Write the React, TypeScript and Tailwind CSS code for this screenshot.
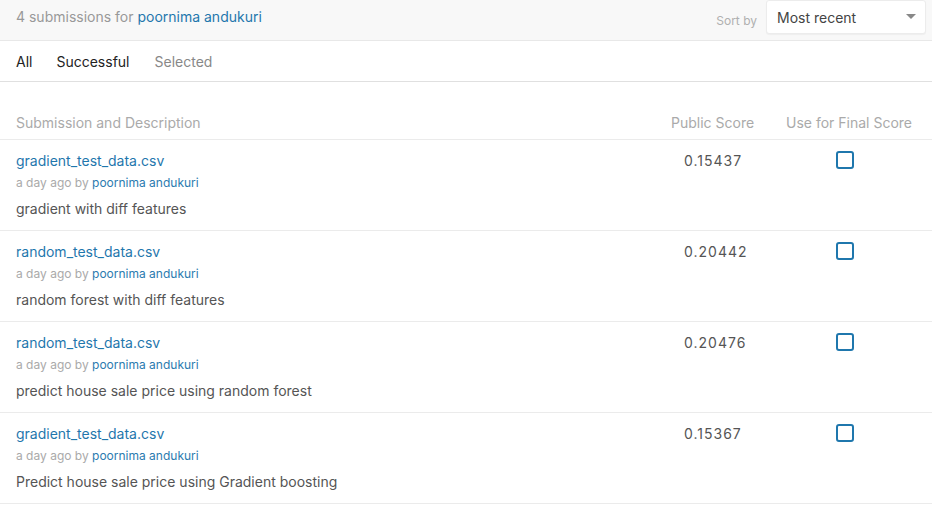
import React from "react"

const rows = [
  { file: "gradient_test_data.csv", desc: "gradient with diff features", score: "0.15437" },
  { file: "random_test_data.csv", desc: "random forest with diff features", score: "0.20442" },
  { file: "random_test_data.csv", desc: "predict house sale price using random forest", score: "0.20476" },
  { file: "gradient_test_data.csv", desc: "Predict house sale price using Gradient boosting", score: "0.15367" },
]

export default function App() {
  return (
    <div className="w-[932px] h-[508px] bg-white overflow-hidden font-['Inter','Liberation_Sans',sans-serif] text-[#333]">
      <div className="h-[41px] bg-[#f8f8f8] border-b border-[#e8e8e8] flex items-start justify-between pl-4 pr-[6px]">
        <div className="text-[14px] text-[#999] leading-none pt-[10px]">
          4 submissions for <span className="text-[#1f77ad]">poornima andukuri</span>
        </div>
        <div className="flex items-start">
          <span className="text-[12px] text-[#b0b0b0] pt-[12px] mr-[9px]">Sort by</span>
          <div className="w-[160px] h-[34px] bg-white rounded-[3px] border border-[#ececec] flex items-center justify-between pl-[10px] pr-[9px] shadow-[0_1px_1px_rgba(0,0,0,0.04)]">
            <span className="text-[14px] text-[#444]">Most recent</span>
            <svg width="10" height="6" viewBox="0 0 10 6">
              <path d="M0 0 L10 0 L5 5 Z" fill="#888" />
            </svg>
          </div>
        </div>
      </div>

      <div className="h-[41px] border-b border-[#e0e0e0] flex items-center pl-4 text-[14px]">
        <span className="text-[#222] mr-[24px]">All</span>
        <span className="text-[#222] mr-[25px]">Successful</span>
        <span className="text-[#888]">Selected</span>
      </div>

      <div className="h-[58px] flex items-end pb-[6px] border-b border-[#ebebeb] text-[14px] text-[#aaa]">
        <div className="pl-4 flex-1">Submission and Description</div>
        <div className="w-[115px]">Public Score</div>
        <div className="w-[146px]">Use for Final Score</div>
      </div>

      {rows.map((r, i) => (
        <div key={i} className="h-[91px] border-b border-[#ebebeb] flex pt-[12px]">
          <div className="pl-4 flex-1">
            <div className="text-[14px] text-[#1f77ad] leading-[18px]">{r.file}</div>
            <div className="text-[12px] text-[#aaa] leading-[16px] mt-[5px]">
              a day ago by <span className="text-[#2b7bb0]">poornima andukuri</span>
            </div>
            <div className="text-[14px] text-[#555] leading-[18px] mt-[9px]">{r.desc}</div>
          </div>
          <div className="w-[164px] pl-[12px] text-[14px] text-[#555] leading-[18px] tracking-[1px]">{r.score}</div>
          <div className="w-[96px]">
            <div className="w-[18px] h-[18px] border-2 border-[#1f77ad] rounded-[3px] mt-[-1px]" />
          </div>
        </div>
      ))}
    </div>
  )
}
